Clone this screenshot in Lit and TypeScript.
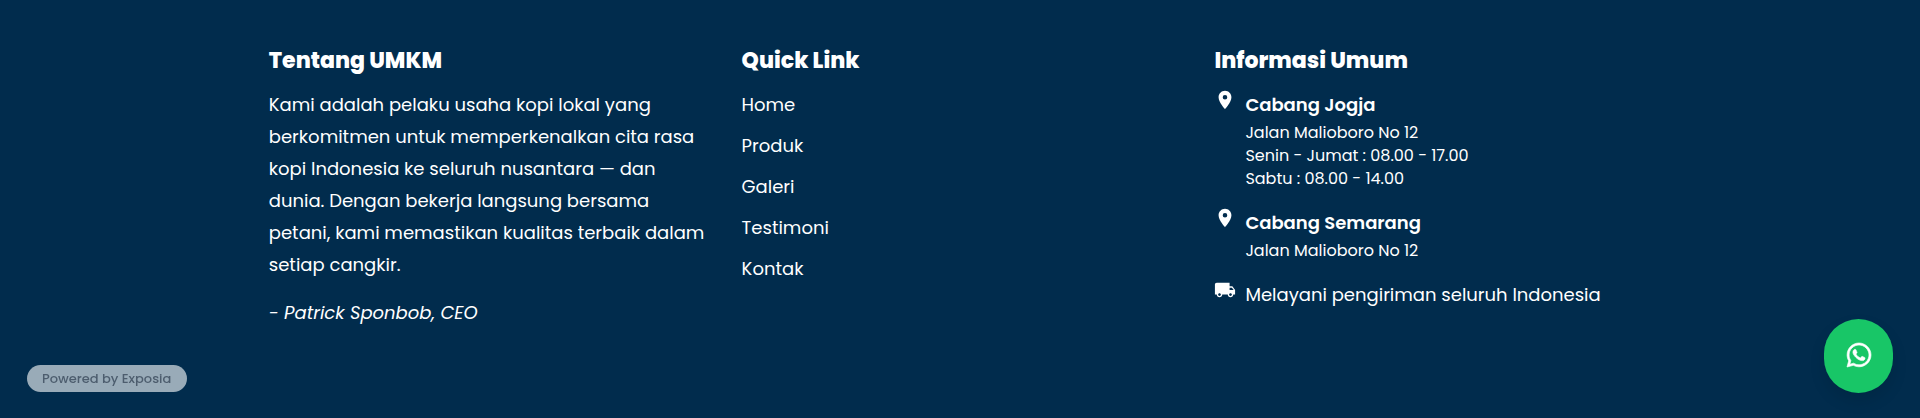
import { LitElement, html, css, svg } from "lit";
import { customElement } from "lit/decorators.js";

const pin = svg`<path d="M12 2C8.13 2 5 5.13 5 9c0 5.25 7 13 7 13s7-7.75 7-13c0-3.87-3.13-7-7-7zm0 9.5a2.5 2.5 0 0 1 0-5 2.5 2.5 0 0 1 0 5z"/>`;
const truck = svg`<path d="M20 8h-3V4H3c-1.100 0-2 .9-2 2v11h2c0 1.660 1.340 3 3 3s3-1.340 3-3h6c0 1.660 1.340 3 3 3s3-1.340 3-3h2v-5l-3-4zM6 18.500c-.83 0-1.500-.67-1.500-1.500s.67-1.500 1.500-1.500 1.500.67 1.500 1.500-.67 1.500-1.500 1.500zm13.500-9l1.960 2.500H17V9.500h2.500zm-1.500 9c-.83 0-1.500-.67-1.500-1.500s.67-1.500 1.500-1.500 1.500.67 1.500 1.500-.67 1.500-1.500 1.500z"/>`;

const links = ["Home", "Produk", "Galeri", "Testimoni", "Kontak"];

const branches = [
  { name: "Cabang Jogja", lines: ["Jalan Malioboro No 12", "Senin - Jumat : 08.00 - 17.00", "Sabtu : 08.00 - 14.00"] },
  { name: "Cabang Semarang", lines: ["Jalan Malioboro No 12"] },
];

@customElement("app-root")
export class AppRoot extends LitElement {
  static styles = css`
    :host {
      display: block;
      min-height: 100vh;
      background: #012c4d;
      color: #fff;
      font-family: Poppins, Inter, "Open Sans", sans-serif;
      font-size: 18px;
      line-height: 32px;
    }
    .footer {
      display: grid;
      grid-template-columns: repeat(3, minmax(0, 1fr));
      gap: 36px;
      padding: 45px 14% 64px;
    }
    h2 {
      margin: 0 0 12px;
      font-size: 22px;
      line-height: 32px;
      font-weight: 800;
    }
    p { margin: 0; }
    .sign { margin-top: 16px; font-style: italic; }
    ul { list-style: none; margin: 0; padding: 0; }
    .links { display: grid; gap: 9px; }
    .links a { color: inherit; text-decoration: none; }
    .info { display: grid; gap: 17px; }
    .info li { display: flex; gap: 9px; }
    .icon { flex: none; width: 22px; height: 22px; fill: currentColor; }
    h3 { margin: 0; font-size: 18px; line-height: 32px; font-weight: 600; }
    .line { font-size: 16px; line-height: 23px; }
    .powered {
      position: fixed;
      left: 27px;
      bottom: 26px;
      padding: 0 16px 0 15px;
      border-radius: 14px;
      background: #99abb8;
      color: #4d5d6e;
      font-size: 13px;
      font-weight: 500;
      line-height: 27px;
      text-decoration: none;
    }
    .chat {
      position: fixed;
      right: 27px;
      bottom: 25px;
      box-sizing: border-box;
      display: grid;
      place-items: center;
      width: 69px;
      height: 74px;
      padding-bottom: 2px;
      border-radius: 35px;
      background: #18c667;
      color: #fff;
      box-shadow: 0 8px 16px rgba(0, 0, 0, 0.1);
    }
    .chat svg {
      width: 24px;
      height: 24px;
      overflow: visible;
      fill: currentColor;
      stroke: currentColor;
      stroke-width: 12;
    }
    @media (max-width: 900px) {
      .footer { grid-template-columns: 1fr; padding: 32px 24px 120px; }
    }
  `;

  render() {
    return html`
      <footer class="footer">
        <section>
          <h2>Tentang UMKM</h2>
          <p>Kami adalah pelaku usaha kopi lokal yang berkomitmen untuk memperkenalkan cita rasa kopi Indonesia ke seluruh nusantara — dan dunia. Dengan bekerja langsung bersama petani, kami memastikan kualitas terbaik dalam setiap cangkir.</p>
          <p class="sign">- Patrick Sponbob, CEO</p>
        </section>
        <nav aria-labelledby="quick">
          <h2 id="quick">Quick Link</h2>
          <ul class="links">
            ${links.map((l) => html`<li><a href="#${l.toLowerCase()}">${l}</a></li>`)}
          </ul>
        </nav>
        <section>
          <h2>Informasi Umum</h2>
          <ul class="info">
            ${branches.map(
              (b) => html`<li>
                <svg class="icon" viewBox="0 0 24 24" aria-hidden="true">${pin}</svg>
                <div>
                  <h3>${b.name}</h3>
                  ${b.lines.map((t) => html`<p class="line">${t}</p>`)}
                </div>
              </li>`
            )}
            <li>
              <svg class="icon" viewBox="0 0 24 24" aria-hidden="true">${truck}</svg>
              <p>Melayani pengiriman seluruh Indonesia</p>
            </li>
          </ul>
        </section>
      </footer>
      <a class="powered" href="#exposia">Powered by Exposia</a>
      <a class="chat" href="#whatsapp" aria-label="WhatsApp">
        <svg viewBox="0 0 448 448" aria-hidden="true"><path d="M380.900 65.100C339 23.100 283.200 0 223.900 0 101.500 0 1.900 99.600 1.900 222c0 39.100 10.200 77.300 29.600 111L0 448l117.700-30.900c32.400 17.700 68.900 27 106.100 27h.1c122.300 0 224.100-99.600 224.100-222 0-59.300-25.200-115-67.100-157zm-157 341.600c-33.200 0-65.700-8.900-94-25.700l-6.700-4-69.800 18.300L72 327.200l-4.400-7c-18.500-29.400-28.200-63.300-28.200-98.200 0-101.700 82.800-184.500 184.600-184.500 49.300 0 95.600 19.200 130.400 54.100 34.800 34.900 56.200 81.200 56.100 130.500 0 101.800-84.900 184.600-186.600 184.600zm101.200-138.200c-5.500-2.800-32.800-16.200-37.900-18-5.100-1.900-8.800-2.800-12.500 2.800-3.700 5.600-14.300 18-17.600 21.800-3.200 3.700-6.500 4.200-12 1.400-32.600-16.300-54-29.100-75.500-66-5.700-9.800 5.700-9.100 16.300-30.300 1.800-3.700.9-6.900-.5-9.700-1.400-2.800-12.500-30.100-17.100-41.200-4.500-10.800-9.100-9.300-12.500-9.500-3.200-.2-6.900-.2-10.600-.2-3.700 0-9.700 1.400-14.800 6.900-5.100 5.600-19.400 19-19.400 46.300 0 27.300 19.900 53.700 22.600 57.400 2.800 3.700 39.100 59.700 94.800 83.800 35.200 15.200 49 16.500 66.600 13.900 10.700-1.600 32.800-13.400 37.400-26.400 4.600-13 4.600-24.100 3.200-26.400-1.300-2.500-5-3.900-10.500-6.600z"/></svg>
      </a>
    `;
  }
}
